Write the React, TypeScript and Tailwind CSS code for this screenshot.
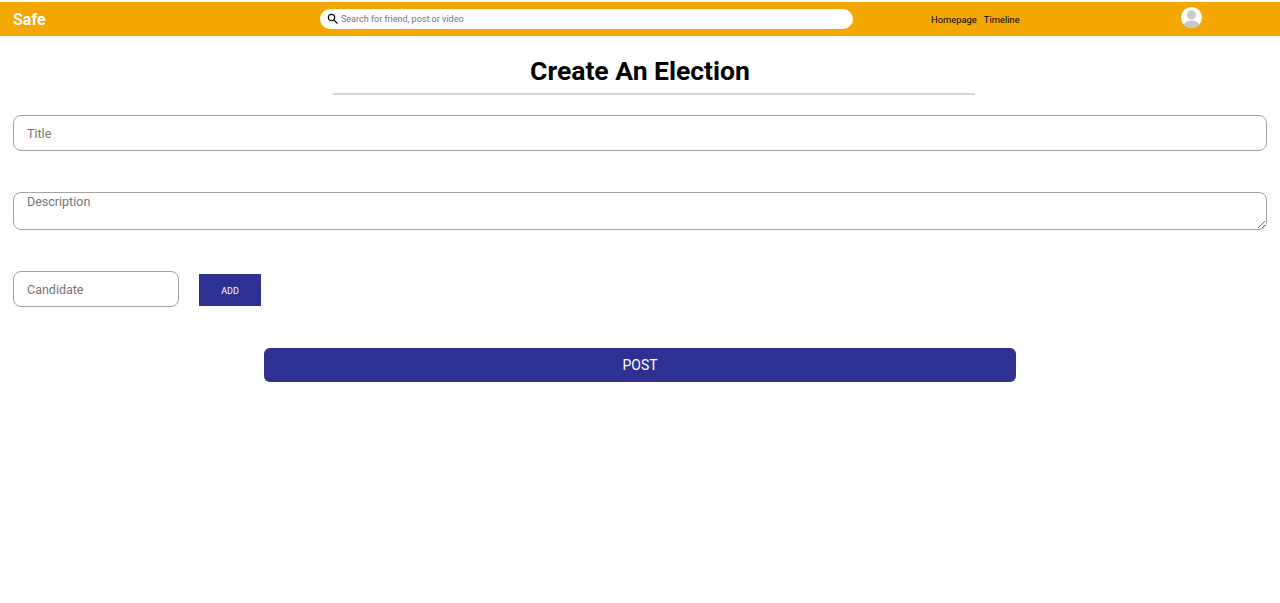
export default function App() {
  return (
    <div className="min-h-[603px] bg-white font-['Roboto',sans-serif] pt-[2px]">
      {/* Navbar */}
      <div className="h-[34px] bg-[#f4a700] flex items-center">
        <div className="w-[320px] pl-[13px] pt-[1px] text-white font-bold text-[16px]">Safe</div>
        <div className="w-[533px] h-[20px] bg-white rounded-[10px] flex items-center pl-[6px] gap-[1px]">
          <svg viewBox="0 0 24 24" className="w-[14px] h-[14px] flex-shrink-0 fill-black">
            <path d="M15.5 14h-.79l-.28-.27C15.41 12.59 16 11.11 16 9.5 16 5.91 13.09 3 9.5 3S3 5.91 3 9.5 5.91 16 9.5 16c1.61 0 3.09-.59 4.23-1.57l.27.28v.79l5 4.99L20.49 19l-4.99-5zm-6 0C7.01 14 5 11.99 5 9.5S7.01 5 9.5 5 14 7.01 14 9.5 11.99 14 9.5 14z" />
          </svg>
          <input
            className="flex-1 pt-[1px] text-[9px] outline-none placeholder:text-[#757575] bg-transparent"
            placeholder="Search for friend, post or video"
          />
        </div>
        <div className="ml-[78px] pt-[2px] flex gap-[7px] text-[9.4px] text-black w-[250px]">
          <span>Homepage</span>
          <span>Timeline</span>
        </div>
        <div className="w-[21px] h-[21px] rounded-full bg-white overflow-hidden -mt-[3px] flex-shrink-0">
          <svg viewBox="0 0 21 21" className="w-full h-full">
            <circle cx="10.5" cy="8" r="4.5" fill="#c8c8c8" />
            <ellipse cx="10.5" cy="18" rx="7.5" ry="4.5" fill="#c8c8c8" />
          </svg>
        </div>
      </div>

      {/* Heading */}
      <h1 className="text-[26.5px] leading-[32px] font-bold text-black text-center mt-[19px]">Create An Election</h1>
      <div className="ml-[333px] w-[642px] h-[2px] bg-[#d6d6d6] mt-[6px]" />

      {/* Form */}
      <div className="px-[13px] mt-[20px]">
        <input
          className="w-full h-[36px] border border-[#a3a3a3] rounded-[8px] px-[13px] text-[12.5px] outline-none placeholder:text-[#757575]"
          placeholder="Title"
        />
        <textarea
          className="block w-full h-[38px] mt-[41px] border border-[#a3a3a3] rounded-[8px] px-[13px] pt-[1px] text-[12.5px] leading-[16px] outline-none placeholder:text-[#757575]"
          placeholder="Description"
        />
        <div className="flex items-center gap-[20px] mt-[41px]">
          <input
            className="w-[166px] h-[36px] border border-[#a3a3a3] rounded-[8px] px-[13px] text-[12.5px] outline-none placeholder:text-[#757575]"
            placeholder="Candidate"
          />
          <button className="w-[62px] h-[32px] mt-[2px] pt-[3px] bg-[#2e3192] text-white text-[9px]">ADD</button>
        </div>
        <div className="flex justify-center mt-[41px]">
          <button className="w-[752px] h-[34px] bg-[#2e3192] text-white text-[14px] rounded-[6px]">POST</button>
        </div>
      </div>
    </div>
  );
}
